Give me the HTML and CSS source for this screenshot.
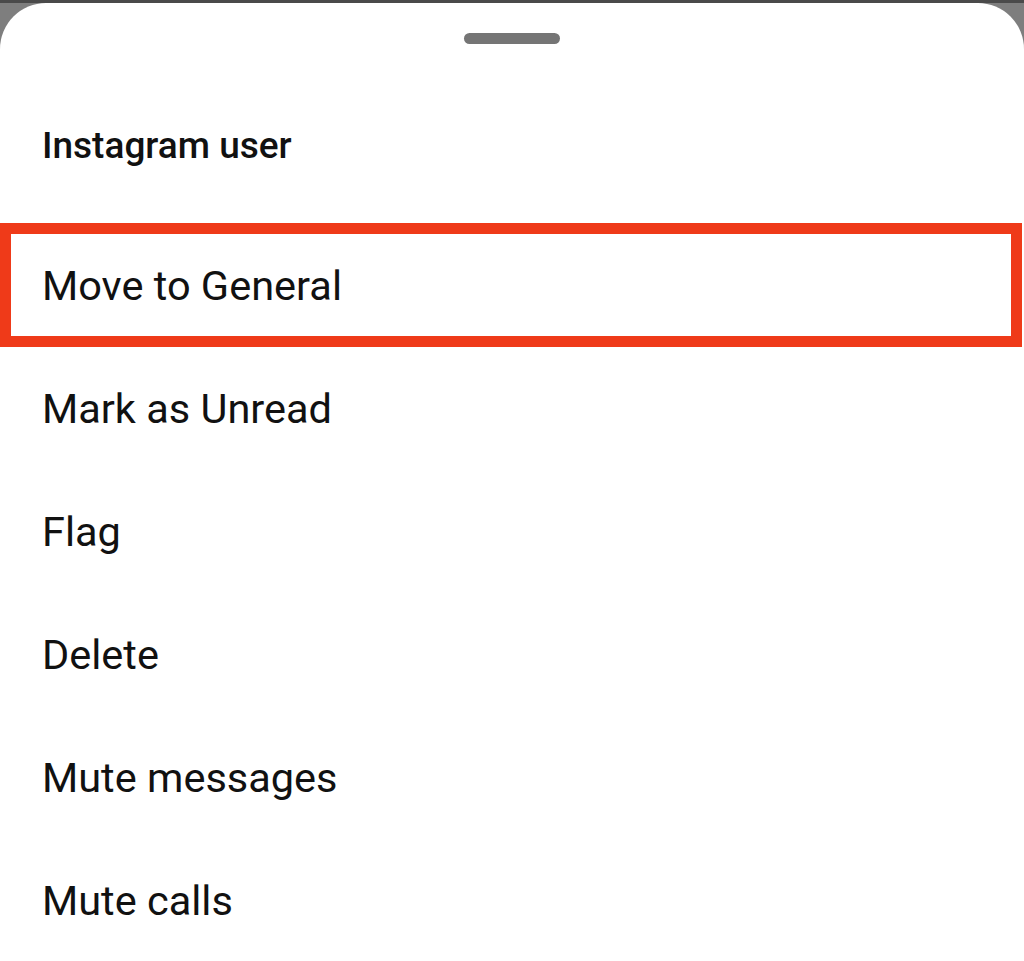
FILE: index.html
```html
<!DOCTYPE html>
<html lang="en">
<head>
    <meta charset="UTF-8">
    <meta name="viewport" content="width=device-width, initial-scale=1.0">
    <title>Instagram user</title>
    <link rel="stylesheet" href="styles.css">
</head>
<body>
    <div class="backdrop"></div>

    <div class="sheet">
        <div class="handle"></div>

        <div class="sheet-title">Instagram user</div>

        <div class="menu">
            <div class="menu-item highlighted">Move to General</div>
            <div class="menu-item">Mark as Unread</div>
            <div class="menu-item">Flag</div>
            <div class="menu-item">Delete</div>
            <div class="menu-item">Mute messages</div>
            <div class="menu-item">Mute calls</div>
        </div>
    </div>
</body>
</html>
```

FILE: styles.css
```css
* {
    margin: 0;
    padding: 0;
    box-sizing: border-box;
}

body {
    width: 1024px;
    height: 961px;
    overflow: hidden;
    background: #7e7e7e;
    font-family: Roboto, 'Noto Sans', sans-serif;
    color: #111;
}

.backdrop {
    height: 3px;
    background: #4a4a4a;
}

.sheet {
    height: 958px;
    background: white;
    border-radius: 46px 46px 0 0;
    padding-top: 30px;
}

.handle {
    width: 96px;
    height: 11px;
    margin: 0 auto;
    border-radius: 6px;
    background: #757575;
}

.sheet-title {
    height: 124px;
    margin-top: 39px;
    margin-bottom: 16px;
    padding-left: 42px;
    display: flex;
    align-items: center;
    font-size: 37px;
    font-weight: 500;
}

.menu-item {
    height: 123px;
    padding-left: 42px;
    display: flex;
    align-items: center;
    font-size: 41.5px;
    font-weight: 400;
}

/* red annotation around the first option */
.highlighted {
    width: 1022px;
    height: 124px;
    padding-left: 31px;
    border: 11px solid #ef3a19;
}
```
